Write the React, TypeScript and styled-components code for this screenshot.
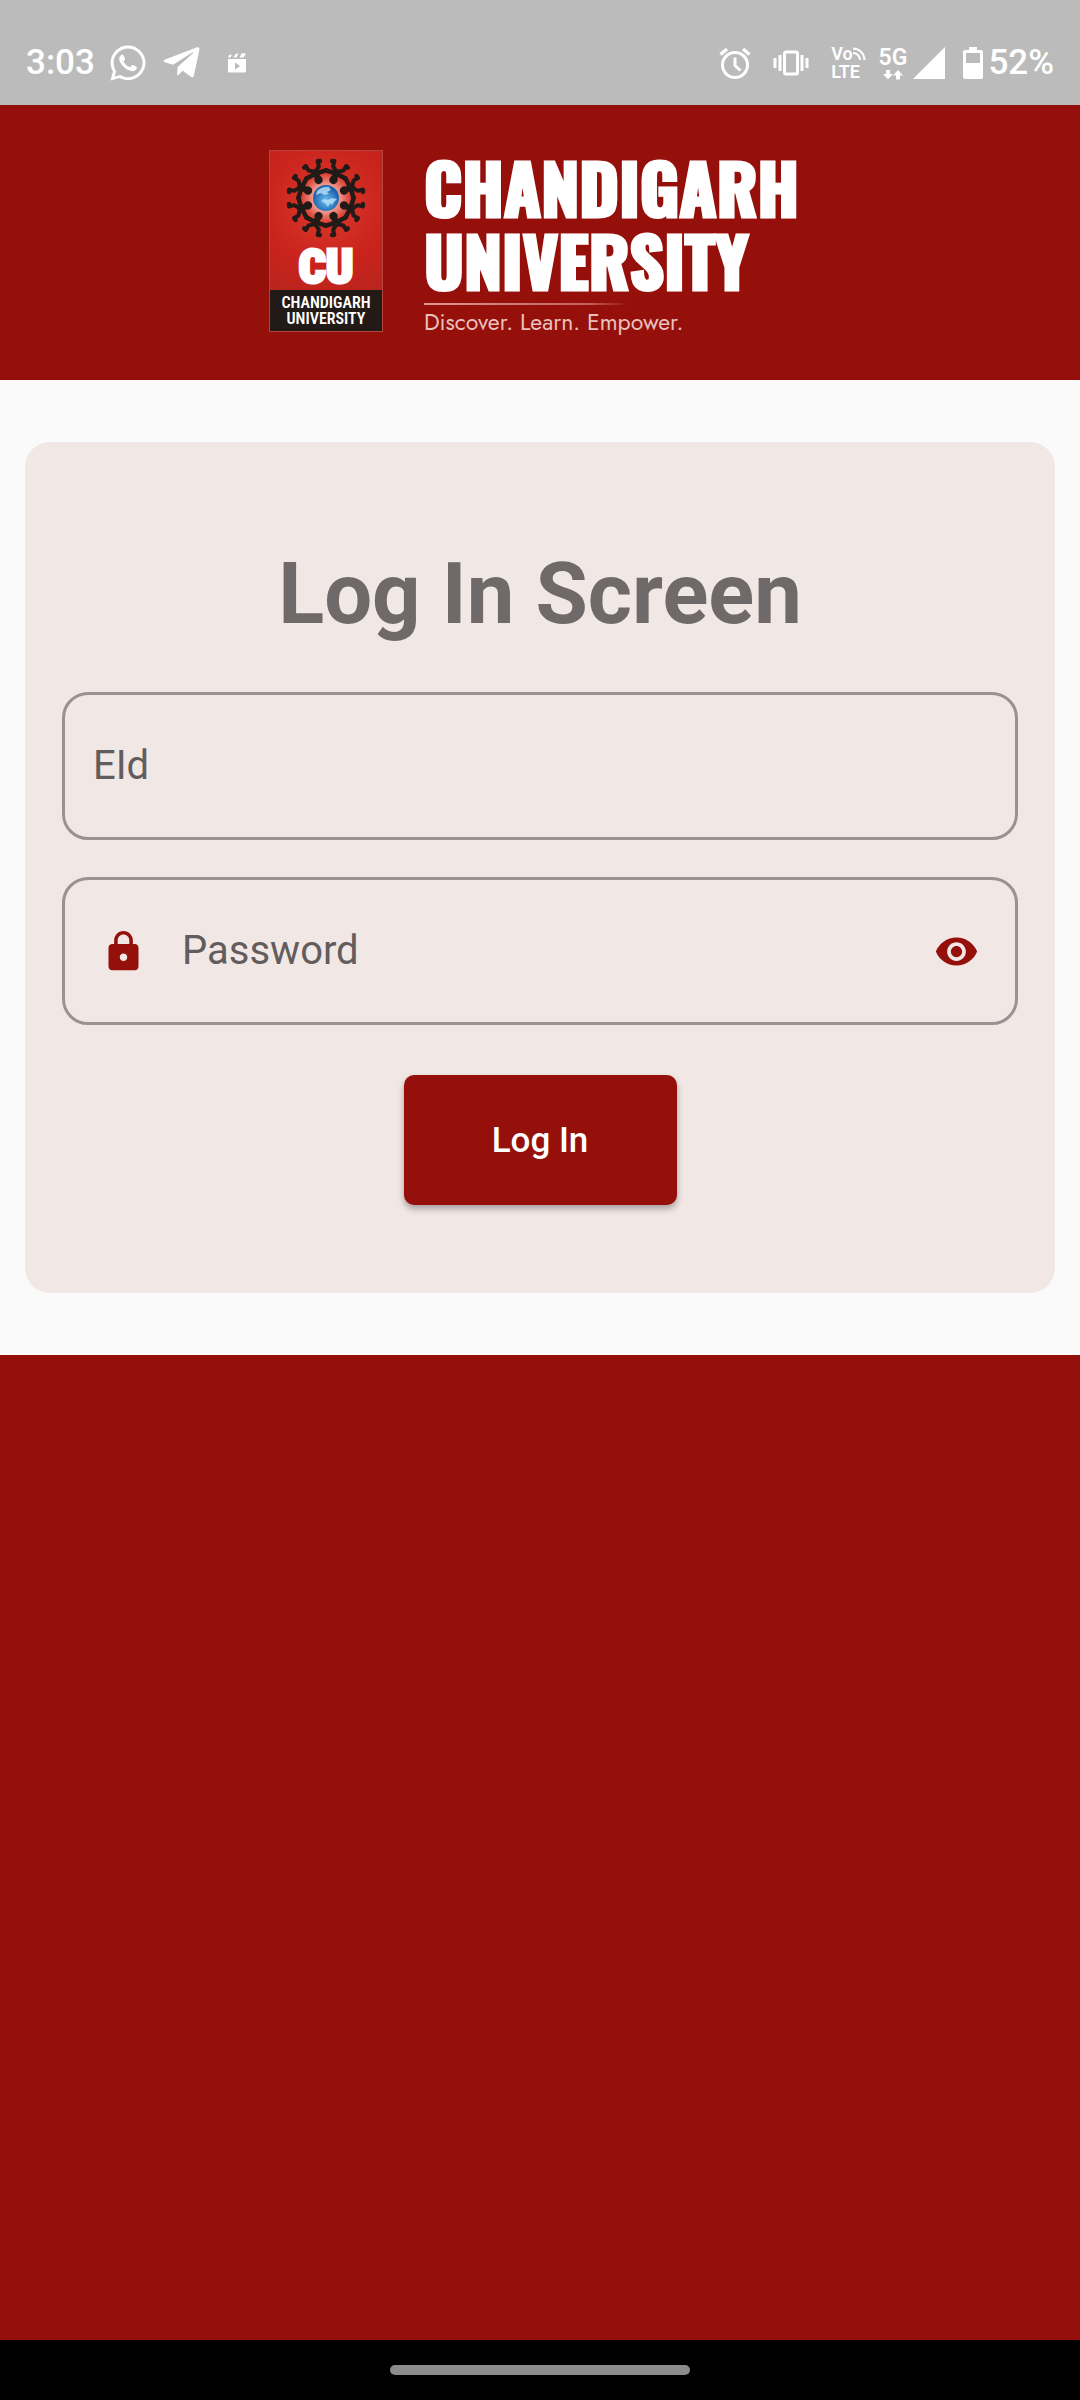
import React, { useState } from "react";
import styled, { createGlobalStyle } from "styled-components";
import { FaTelegramPlane, FaWhatsapp } from "react-icons/fa";
import { MdLock, MdVisibility } from "react-icons/md";

const color = {
  brand: "#950f0b",
  status: "#bbbbbb",
  page: "#fafafa",
  card: "#f1e7e5",
  outline: "#9a9292",
  title: "#6f6a69",
  hint: "#625d5c",
};

const GlobalStyle = createGlobalStyle`
  *, *::before, *::after { box-sizing: border-box; }
  body {
    margin: 0;
    background: ${color.brand};
    font-family: Roboto, "Liberation Sans", sans-serif;
  }
`;

const Screen = styled.div`
  display: flex;
  flex-direction: column;
  min-height: 100vh;
`;

/* ---------- status bar ---------- */

const StatusBar = styled.div`
  display: flex;
  align-items: center;
  justify-content: space-between;
  height: 105px;
  padding: 20px 26px 0;
  background: ${color.status};
  color: #fff;
`;

const StatusGroup = styled.div<{ $gap: number }>`
  display: flex;
  align-items: center;
  gap: ${(p) => p.$gap}px;
`;

const StatusText = styled.span`
  font-size: 35px;
  line-height: 42px;
  font-weight: 500;
`;

const Stack = styled.div`
  display: flex;
  flex-direction: column;
`;

const StackRow = styled.div`
  display: flex;
  align-items: flex-end;
`;

const TinyText = styled.span`
  font-size: 18px;
  line-height: 18px;
  font-weight: 600;
`;

const NetworkText = styled.span`
  font-size: 23px;
  line-height: 24px;
  font-weight: 600;
`;

const Glyph = styled.svg`
  display: block;
  flex: none;
`;

const ArrowsGlyph = styled(Glyph)`
  align-self: center;
`;

/* ---------- brand header ---------- */

const Header = styled.header`
  display: flex;
  align-items: flex-start;
  justify-content: center;
  gap: 41px;
  height: 275px;
  padding: 45px 12px 0 0;
  background: ${color.brand};
  color: #fff;
`;

const Crest = styled.div`
  display: flex;
  flex-direction: column;
  align-items: center;
  width: 114px;
  height: 182px;
  border: 1px solid #b5453c;
  background: radial-gradient(circle at 50% 30%, #dc3a2c 0%, #c9231c 45%, #a8261f 100%);
`;

const CrestInitials = styled.span`
  font-family: "Roboto Condensed", Roboto, sans-serif;
  font-size: 48px;
  line-height: 43px;
  font-weight: 900;
  -webkit-text-stroke: 3px #fff;
`;

const CrestName = styled.span`
  display: flex;
  flex-direction: column;
  align-items: center;
  justify-content: center;
  align-self: stretch;
  height: 41px;
  margin-top: auto;
  background: #211a17;
  font-family: "Roboto Condensed", Roboto, sans-serif;
  font-size: 16px;
  line-height: 16px;
  font-weight: 600;
`;

const Wordmark = styled.div`
  display: flex;
  flex-direction: column;
`;

const WordmarkLine = styled.span`
  font-family: Oswald, Anton, "Roboto Condensed", sans-serif;
  font-size: 68px;
  line-height: 73px;
  font-weight: 700;
  -webkit-text-stroke: 3px #fff;
`;

const Rule = styled.span`
  width: 205px;
  height: 2px;
  margin: 7px 0 3px;
  background: linear-gradient(90deg, #dc9a94, #c4625c 80%, ${color.brand});
`;

const Tagline = styled.span`
  color: #e9c0bc;
  font-family: Jost, Lato, sans-serif;
  font-size: 23px;
  line-height: 28px;
`;

/* ---------- login form ---------- */

const Panel = styled.main`
  padding: 62px 25px;
  background: ${color.page};
`;

const Card = styled.form`
  display: flex;
  flex-direction: column;
  align-items: center;
  padding: 102px 37px 88px;
  border-radius: 25px;
  background: ${color.card};
`;

const Title = styled.h1`
  margin: 0 0 48px;
  color: ${color.title};
  font-size: 85px;
  line-height: 100px;
  font-weight: 700;
`;

const Field = styled.label<{ $inset: number }>`
  display: flex;
  align-items: center;
  align-self: stretch;
  height: 148px;
  margin-bottom: 37px;
  padding: 0 ${(p) => p.$inset}px;
  border: 3px solid ${color.outline};
  border-radius: 26px;
  color: ${color.brand};
`;

const FieldInput = styled.input`
  flex: 1;
  min-width: 0;
  padding: 0;
  border: 0;
  outline: 0;
  background: transparent;
  color: #222;
  font-family: inherit;
  font-size: 40px;
  line-height: 48px;

  &::placeholder {
    color: ${color.hint};
    opacity: 1;
  }
`;

const FieldIcon = styled.span`
  display: flex;
  justify-content: center;
  width: 117px;
  font-size: 45px;
`;

const ToggleButton = styled.button`
  display: flex;
  justify-content: center;
  width: 117px;
  padding: 0;
  border: 0;
  background: transparent;
  color: inherit;
  font-size: 45px;
`;

const SubmitButton = styled.button`
  margin-top: 13px;
  min-width: 273px;
  height: 130px;
  border: 0;
  border-radius: 10px;
  background: ${color.brand};
  box-shadow: 0 4px 6px rgba(0, 0, 0, 0.3);
  color: #fff;
  font-family: inherit;
  font-size: 35px;
  font-weight: 500;
`;

/* ---------- navigation bar ---------- */

const NavBar = styled.div`
  display: flex;
  align-items: center;
  justify-content: center;
  height: 60px;
  margin-top: auto;
  background: #000;
`;

const NavHandle = styled.div`
  width: 300px;
  height: 10px;
  border-radius: 5px;
  background: #8c8c8c;
`;

/* ---------- drawings ---------- */

const ClapperIcon = () => (
  <Glyph width="18" height="20" viewBox="0 0 18 20" fill="#fff">
    <path d="M0 6h18v12a1.500 1.500 0 0 1-1.500 1.500h-15A1.500 1.500 0 0 1 0 18zM7 9.500v7l5-3.500z" fillRule="evenodd" />
    <path d="M0 4.500 1 2l3-.6L2.500 4.500zM5.500 4.500 7.500 1l3-.5L8.500 4.500zM11.500 4.500l2-4 3.500-.5.500 1.500-2 3z" />
  </Glyph>
);

const AlarmIcon = () => (
  <Glyph width="32" height="32" viewBox="0 0 32 32" fill="none" stroke="#fff">
    <circle cx="16" cy="18" r="12.500" strokeWidth="3" />
    <path d="M16 10.500v8l5.500 5" strokeWidth="3" />
    <path d="M1.500 7.500 8 2M30.500 7.500 24 2" strokeWidth="3.500" />
  </Glyph>
);

const VibrateIcon = () => (
  <Glyph width="36" height="26" viewBox="0 0 36 26" fill="none" stroke="#fff" strokeWidth="3">
    <rect x="11.500" y="2" width="13" height="22" rx="1.500" />
    <path d="M7 5v16M29 5v16M2 8v10M34 8v10" />
  </Glyph>
);

const WavesIcon = () => (
  <Glyph width="13" height="16" viewBox="0 0 13 16" fill="none" stroke="#fff" strokeWidth="2">
    <path d="M0 1.500A11.500 11.500 0 0 1 11.500 13M0 6a7 7 0 0 1 7 7" />
  </Glyph>
);

const DataArrows = () => (
  <ArrowsGlyph width="20" height="10" viewBox="0 0 20 10" fill="#fff">
    <path d="M3 0h4v4h3L5 9.500 0 4h3zM13 9.500h4v-4h3L15 0l-5 5.500h3z" />
  </ArrowsGlyph>
);

const SignalIcon = () => (
  <Glyph width="32" height="32" viewBox="0 0 32 32" fill="#fff">
    <path d="M32 0v32H0z" />
  </Glyph>
);

const BatteryIcon = () => (
  <Glyph width="20" height="32" viewBox="0 0 20 32" fill="#fff">
    <path
      fillRule="evenodd"
      d="M6 0h8v3h4a2 2 0 0 1 2 2v25a2 2 0 0 1-2 2H2a2 2 0 0 1-2-2V5a2 2 0 0 1 2-2h4zM3 6v10h14V6z"
    />
  </Glyph>
);

const EmblemFigure = ({ angle }: { angle: number }) => (
  <g transform={`rotate(${angle})`} stroke="#211a17" strokeLinecap="round" strokeLinejoin="round" fill="none">
    <circle cx="0" cy="-19.500" r="4.200" fill="#211a17" stroke="none" />
    <path d="M0-22V-28" strokeWidth="6" />
    <path d="M-10.500-25.500L0-26.500 10.500-25.500" strokeWidth="4.500" />
    <path d="M0-28L-5.500-32-6.500-37M0-28L5.500-32 6.500-37" strokeWidth="4" />
    <path d="M-6.500-37L-8.500-36.500M6.500-37L8.500-36.500" strokeWidth="4.500" />
  </g>
);

const Emblem = () => (
  <Glyph width="88" height="94" viewBox="-44 -47 88 94">
    <defs>
      <radialGradient id="glow">
        <stop offset="0.4" stopColor="#f6b5a8" />
        <stop offset="1" stopColor="#d8392d" />
      </radialGradient>
      <radialGradient id="globe" cx="0.5" cy="0.6">
        <stop offset="0" stopColor="#6cc0ee" />
        <stop offset="1" stopColor="#1c62ae" />
      </radialGradient>
    </defs>
    <circle r="25" fill="url(#glow)" />
    {[22.5, 67.5, 112.5, 157.5, 202.5, 247.5, 292.5, 337.5].map((angle) => (
      <EmblemFigure key={angle} angle={angle} />
    ))}
    <circle r="13" fill="url(#globe)" />
    <path
      d="M-9-7Q-3-12 3-11L5-8 1-6 3-4-2-3-5-5-10-3zM-5 3l3-2 4 1 4-2 5 1-3 3-2 3-2-2-2 4-3-4z"
      fill="#b9e2f7"
      opacity="0.8"
    />
  </Glyph>
);

/* ---------- screen ---------- */

export default function App() {
  const [visible, setVisible] = useState(false);

  return (
    <Screen>
      <GlobalStyle />
      <StatusBar>
        <StatusGroup $gap={26}>
          <StatusGroup $gap={13}>
            <StatusText>3:03</StatusText>
            <FaWhatsapp size={40} />
            <FaTelegramPlane size={41} />
          </StatusGroup>
          <ClapperIcon />
        </StatusGroup>
        <StatusGroup $gap={18}>
          <StatusGroup $gap={13}>
            <StatusGroup $gap={22}>
              <AlarmIcon />
              <VibrateIcon />
              <Stack>
                <StackRow>
                  <TinyText>Vo</TinyText>
                  <WavesIcon />
                </StackRow>
                <TinyText>LTE</TinyText>
              </Stack>
            </StatusGroup>
            <StatusGroup $gap={6}>
              <Stack>
                <NetworkText>5G</NetworkText>
                <DataArrows />
              </Stack>
              <SignalIcon />
            </StatusGroup>
          </StatusGroup>
          <StatusGroup $gap={5}>
            <BatteryIcon />
            <StatusText>52%</StatusText>
          </StatusGroup>
        </StatusGroup>
      </StatusBar>

      <Header>
        <Crest>
          <Emblem />
          <CrestInitials>CU</CrestInitials>
          <CrestName>
            <span>CHANDIGARH</span>
            <span>UNIVERSITY</span>
          </CrestName>
        </Crest>
        <Wordmark>
          <WordmarkLine>CHANDIGARH</WordmarkLine>
          <WordmarkLine>UNIVERSITY</WordmarkLine>
          <Rule />
          <Tagline>Discover. Learn. Empower.</Tagline>
        </Wordmark>
      </Header>

      <Panel>
        <Card onSubmit={(e) => e.preventDefault()}>
          <Title>Log In Screen</Title>
          <Field $inset={28}>
            <FieldInput type="text" placeholder="EId" aria-label="EId" />
          </Field>
          <Field $inset={0}>
            <FieldIcon>
              <MdLock />
            </FieldIcon>
            <FieldInput type={visible ? "text" : "password"} placeholder="Password" aria-label="Password" />
            <ToggleButton type="button" aria-label="Show password" onClick={() => setVisible(!visible)}>
              <MdVisibility />
            </ToggleButton>
          </Field>
          <SubmitButton type="submit">Log In</SubmitButton>
        </Card>
      </Panel>

      <NavBar>
        <NavHandle />
      </NavBar>
    </Screen>
  );
}
